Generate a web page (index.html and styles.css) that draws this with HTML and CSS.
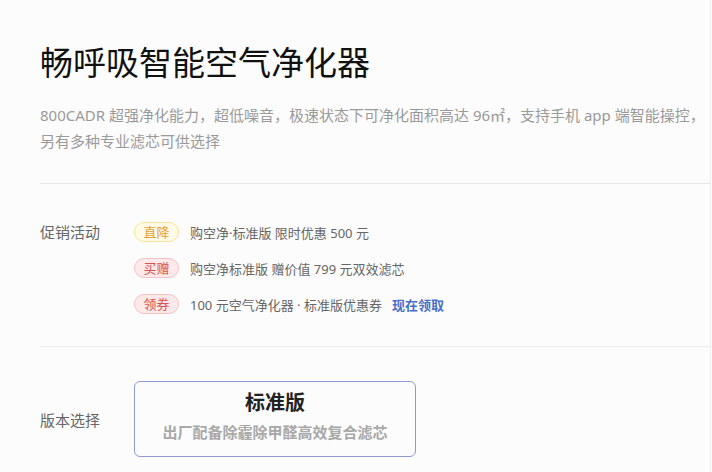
FILE: index.html
```html
<!DOCTYPE html>
<html lang="zh-CN">
<head>
<meta charset="utf-8">
<title>畅呼吸智能空气净化器</title>
<link rel="stylesheet" href="styles.css">
</head>
<body>
<div class="page">
  <header class="head">
    <h1 class="title">畅呼吸智能空气净化器</h1>
    <p class="desc"><span class="desc-line">800CADR 超强净化能力，超低噪音，极速状态下可净化面积高达 96㎡，支持手机 app 端智能操控，</span><span class="desc-line">另有多种专业滤芯可供选择</span></p>
  </header>
  <section class="section promo">
    <div class="label">促销活动</div>
    <ul class="promo-list">
      <li class="promo-row"><span class="badge badge-yellow">直降</span><span class="promo-text">购空净·标准版 限时优惠 500 元</span></li>
      <li class="promo-row"><span class="badge badge-red">买赠</span><span class="promo-text">购空净标准版 赠价值 799 元双效滤芯</span></li>
      <li class="promo-row"><span class="badge badge-red">领券</span><span class="promo-text">100 元空气净化器 · 标准版优惠券</span><a class="promo-link" href="#">现在领取</a></li>
    </ul>
  </section>
  <section class="section version">
    <div class="label">版本选择</div>
    <div class="card">
      <div class="card-title">标准版</div>
      <div class="card-sub">出厂配备除霾除甲醛高效复合滤芯</div>
    </div>
  </section>
</div>
</body>
</html>
```

FILE: styles.css
```css
* { box-sizing: border-box; }
html, body { margin: 0; padding: 0; }
body {
  background: #fcfcfc;
  font-family: "Noto Sans", "Noto Sans CJK SC", sans-serif;
  color: #333;
}
.page {
  width: 711px;
  height: 472px;
  border-right: 1px solid #efefef;
  padding-left: 40px;
  overflow: hidden;
}
.head {
  padding-top: 40px;
  padding-bottom: 29px;
  border-bottom: 1px solid #e6e6e6;
}
.title {
  margin: 0;
  font-size: 33px;
  line-height: 45px;
  font-weight: 400;
  color: #111;
}
.desc {
  margin: 17px 0 0;
  font-size: 15px;
  line-height: 26px;
  color: #9a9a9a;
}
.desc-line {
  display: block;
  white-space: nowrap;
}
.section {
  display: flex;
  align-items: flex-start;
}
.label {
  width: 94px;
  flex: none;
  font-size: 15px;
  color: #666;
}
.promo {
  padding-top: 30px;
  padding-bottom: 24px;
  border-bottom: 1px solid #ececec;
}
.promo .label { line-height: 36px; }
.promo-list {
  list-style: none;
  margin: 0;
  padding: 0;
}
.promo-row {
  height: 36px;
  display: flex;
  align-items: center;
}
.badge {
  width: 45px;
  height: 20px;
  border-radius: 10px;
  border: 1px solid;
  font-size: 13px;
  line-height: 18px;
  text-align: center;
  margin-right: 11px;
}
.badge-yellow {
  background: #fffbe6;
  border-color: #f6e49a;
  color: #e3a030;
}
.badge-red {
  background: #fde9e9;
  border-color: #f3c3c3;
  color: #d9534f;
}
.promo-text {
  font-size: 13px;
  color: #666;
}
.promo-link {
  margin-left: 10px;
  font-size: 13px;
  font-weight: 700;
  color: #4a6ec8;
  text-decoration: none;
}
.version {
  padding-top: 34px;
  align-items: center;
}
.card {
  width: 282px;
  height: 76px;
  border: 1px solid #8f99d6;
  border-radius: 6px;
  display: flex;
  flex-direction: column;
  align-items: center;
  padding-top: 8px;
  gap: 5px;
}
.card-title {
  font-size: 20px;
  line-height: 26px;
  font-weight: 700;
  color: #222;
}
.card-sub {
  font-size: 15px;
  line-height: 22px;
  font-weight: 700;
  color: #a8a8a8;
}
```
